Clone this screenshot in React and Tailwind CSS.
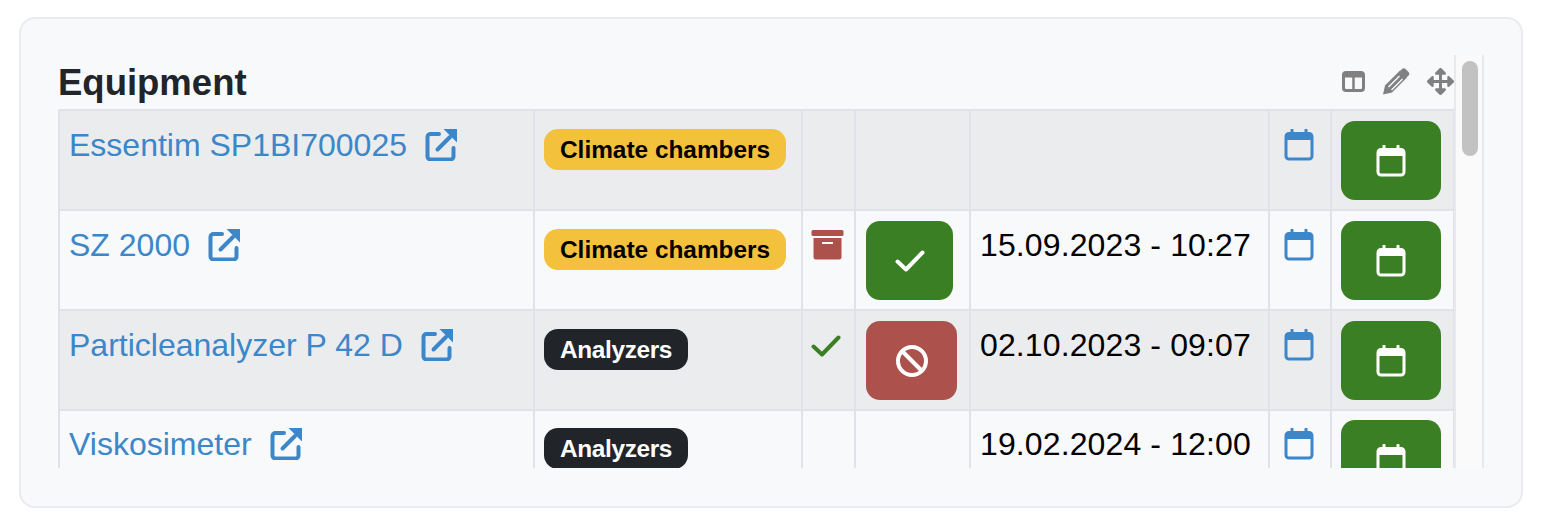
import { FaArrowsAlt } from "react-icons/fa";

const rows = [
  { name: "Essentim SP1BI700025", tag: "Climate chambers", date: "", shaded: true },
  { name: "SZ 2000", tag: "Climate chambers", status: "archive", action: "check", date: "15.09.2023 - 10:27" },
  { name: "Particleanalyzer P 42 D", tag: "Analyzers", status: "check", action: "ban", date: "02.10.2023 - 09:07", shaded: true },
  { name: "Viskosimeter", tag: "Analyzers", date: "19.02.2024 - 12:00", raised: true },
];

function ExternalIcon() {
  return (
    <svg viewBox="0 0 32 32" className="h-8 w-8 shrink-0 text-[#3b87c9]" fill="none">
      <path d="M14 5H5.500A3 3 0 0 0 2.500 8v19.500a3 3 0 0 0 3 3h20a3 3 0 0 0 3-3V19" stroke="currentColor" strokeWidth="4" strokeLinecap="round" />
      <path d="M12.500 20.500 25 8" stroke="currentColor" strokeWidth="4" strokeLinecap="round" />
      <path d="M18.500 0H32v13.500z" fill="currentColor" />
    </svg>
  );
}

function CalendarIcon({ className }) {
  return (
    <svg viewBox="0 0 30 32" className={className} fill="none">
      <path d="M8 1v5M22 1v5" stroke="currentColor" strokeWidth="3" strokeLinecap="round" />
      <rect x="2" y="4.500" width="26" height="25.500" rx="3" stroke="currentColor" strokeWidth="3" />
      <path d="M2 7a3 3 0 0 1 3-3h20a3 3 0 0 1 3 3v4H2z" fill="currentColor" />
    </svg>
  );
}

function CheckIcon({ className }) {
  return (
    <svg viewBox="0 0 30 22" className={className} fill="none">
      <path d="M2.500 11.500 11 19.500 27.500 2.500" stroke="currentColor" strokeWidth="4" strokeLinecap="round" strokeLinejoin="round" />
    </svg>
  );
}

function ArchiveIcon() {
  return (
    <svg viewBox="0 0 33 30" className="h-[30px] w-[33px] text-[#ad514d]">
      <rect x="0.500" y="0" width="32" height="6" rx="1.500" fill="currentColor" />
      <path d="M2.500 8h28v19a2.500 2.500 0 0 1-2.500 2.500H5A2.500 2.500 0 0 1 2.500 27z" fill="currentColor" />
      <rect x="11" y="12" width="11" height="2" fill="#f8f9fb" />
    </svg>
  );
}

function BanIcon() {
  return (
    <svg viewBox="0 0 32 32" className="h-8 w-8 text-white" fill="none">
      <circle cx="16" cy="16" r="14" stroke="currentColor" strokeWidth="4" />
      <path d="M6.500 6.500 25.500 25.500" stroke="currentColor" strokeWidth="4" />
    </svg>
  );
}

function PencilIcon() {
  return (
    <svg viewBox="0 0 27 27" className="h-[27px] w-[28px] text-[#808080]">
      <path d="M0.500 26.500 2.500 17.500 17.500 2.500 24.500 9.500 9.500 24.500z" fill="currentColor" />
      <path d="M5.500 18.500 16.500 7.500 17.500 8.500 6.500 19.500zM8.500 21.500 19.500 10.500 20.500 11.500 9.500 22.500z" fill="#f8f9fb" />
      <path d="M19.500 1a2.500 2.500 0 0 1 3.500 0L26 4a2.500 2.500 0 0 1 0 3.500L24 9.500l-6.500-6.500z" fill="currentColor" />
    </svg>
  );
}

function ColumnsIcon() {
  return (
    <svg viewBox="0 0 23 21" className="h-[21px] w-[23px] text-[#808080]" fill="none">
      <rect x="1.500" y="1.500" width="20" height="18" rx="2.500" stroke="currentColor" strokeWidth="3" />
      <path d="M1 4.500h21" stroke="currentColor" strokeWidth="4" />
      <path d="M11.500 5v15" stroke="currentColor" strokeWidth="2.500" />
    </svg>
  );
}

function Tag({ label }) {
  const color = label === "Analyzers" ? "bg-[#212529] text-white tracking-[-0.35px]" : "bg-[#f4c13d] text-black";
  return (
    <span className={`inline-block h-[41px] rounded-[14px] px-4 text-[24.4px] leading-[41px] font-bold ${color}`}>
      {label}
    </span>
  );
}

const cell = "border-[2px] border-[#e0e2e8] align-top";

export default function App() {
  return (
    <div className="h-[532px] w-[1546px] bg-white pt-[17px] pl-[19px] font-['Liberation_Sans',Arial,sans-serif]">
      <div className="h-[491px] w-[1504px] rounded-[16px] border-2 border-[#e9ebef] bg-[#f8f9fb] pt-[36px] pl-[37px]">
        <div className="flex h-[413px] w-[1427px] overflow-hidden">
          <div className="w-[1396px] shrink-0">
            <div className="flex h-[54px] items-end justify-between pb-[8px]">
              <h2 className="text-[36.5px] leading-[36px] font-bold text-[#212529]">Equipment</h2>
              <div className="mb-[6px] flex items-center gap-[17px] text-[#808080]">
                <ColumnsIcon />
                <PencilIcon />
                <FaArrowsAlt className="h-[27px] w-[27px]" />
              </div>
            </div>
            <table className="w-[1395px] table-fixed border-collapse text-[32px] text-black">
              <colgroup>
                <col className="w-[475px]" />
                <col className="w-[268px]" />
                <col className="w-[53px]" />
                <col className="w-[115px]" />
                <col className="w-[299px]" />
                <col className="w-[62px]" />
                <col className="w-[123px]" />
              </colgroup>
              <tbody>
                {rows.map((row) => (
                  <tr
                    key={row.name}
                    className={`h-[100px] ${row.shaded ? "bg-[#ebecee]" : ""} ${row.raised ? "[&>td>*]:-translate-y-px" : ""}`}
                  >
                    <td className={`${cell} px-[9px] pt-[16px]`}>
                      <a className="flex items-center gap-[18px] text-[#3b87c9]" href="#">
                        <span className="leading-[36px]">{row.name}</span>
                        <ExternalIcon />
                      </a>
                    </td>
                    <td className={`${cell} px-[9px] pt-[12px]`}>
                      <Tag label={row.tag} />
                    </td>
                    <td className={`${cell} pl-[8px] ${row.status === "check" ? "pt-[24px]" : "pt-[19px]"}`}>
                      {row.status === "archive" && <ArchiveIcon />}
                      {row.status === "check" && <CheckIcon className="h-[22px] w-[30px] text-[#3a7f24]" />}
                    </td>
                    <td className={`${cell} pt-[10px] pl-[10px]`}>
                      {row.action === "check" && (
                        <button className="flex h-[79px] w-[87px] items-center justify-center rounded-[14px] bg-[#3a7f24]">
                          <CheckIcon className="h-[22px] w-[30px] text-white" />
                        </button>
                      )}
                      {row.action === "ban" && (
                        <button className="flex h-[79px] w-[91px] items-center justify-center rounded-[14px] bg-[#ad514d]">
                          <BanIcon />
                        </button>
                      )}
                    </td>
                    <td className={`${cell} pt-[16px] pl-[9px] leading-[36px] tracking-[0.12px]`}>
                      <div>{row.date}</div>
                    </td>
                    <td className={`${cell} pt-[18px] pl-[14px]`}>
                      <CalendarIcon className="h-8 w-[30px] text-[#3b87c9]" />
                    </td>
                    <td className={`${cell} pt-[10px] pl-[9px]`}>
                      <button className="flex h-[79px] w-[100px] items-center justify-center rounded-[14px] bg-[#3a7f24]">
                        <CalendarIcon className="h-8 w-[30px] text-white" />
                      </button>
                    </td>
                  </tr>
                ))}
              </tbody>
            </table>
          </div>
          {/* scrollbar */}
          <div className="h-full w-[30px] shrink-0 border-x-2 border-[#e8e9ed] bg-[#fafafa] pt-[6px] pl-[6px]">
            <div className="h-[95px] w-4 rounded-full bg-[#c2c2c2]" />
          </div>
        </div>
      </div>
    </div>
  );
}
